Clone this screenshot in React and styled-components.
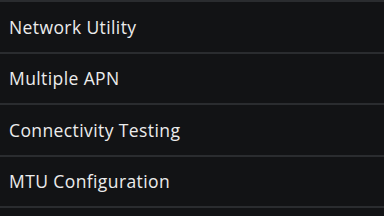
import React from "react"
import styled, { createGlobalStyle } from "styled-components"

const GlobalStyle = createGlobalStyle`
  html, body {
    margin: 0;
    padding: 0;
    background: #121315;
  }
`

const Screen = styled.div`
  width: 384px;
  height: 216px;
  overflow: hidden;
  background: #121315;
  font-family: "Open Sans", "DejaVu Sans", sans-serif;
`

const List = styled.ul`
  list-style: none;
  margin: 0;
  padding: 0;
  border-top: 2px solid #2a2c2f;
`

const Row = styled.li`
  display: flex;
  align-items: center;
  height: 49.5px;
  padding: 0 9px;
  border-bottom: 2px solid #2a2c2f;
  color: #ececec;
  font-size: 17.5px;
  letter-spacing: 0.4px;
`

const items = [
  "Network Utility",
  "Multiple APN",
  "Connectivity Testing",
  "MTU Configuration",
]

export default () => (
  <Screen>
    <GlobalStyle />
    <List>
      {
        items.map((text) => (
          <Row key={ text }>{ text }</Row>
        ))
      }
    </List>
  </Screen>
)
